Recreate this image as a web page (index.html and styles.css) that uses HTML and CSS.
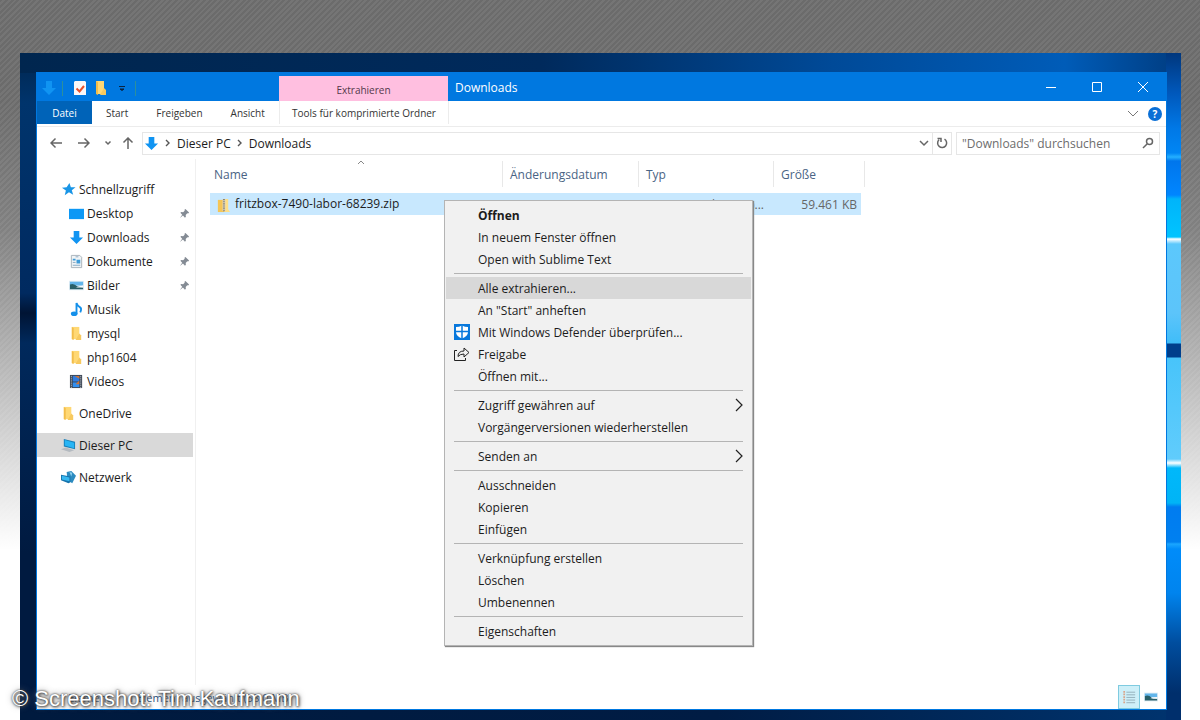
FILE: index.html
```html
<!DOCTYPE html>
<html lang="de">
<head>
  <meta charset="UTF-8" />
  <meta name="viewport" content="width=device-width, initial-scale=1.0"/>
  <title>Downloads</title>
  <link rel="stylesheet" href="styles.css">
</head>
<body>

  <!-- Shared icons -->
  <svg class="sprite" aria-hidden="true">
    <symbol id="i-down" viewBox="0 0 16 16"><path d="M5 1h6v7h4l-7 7-7-7h4z" fill="#1094f2"/></symbol>
    <symbol id="i-folder" viewBox="0 0 16 16"><path d="M3 1h8v13H3z" fill="#ffd874"/><path d="M3 1l2 1v13l-2-1z" fill="#f2bd4b"/><path d="M11 8l2 2v5H7z" fill="#f7c95f"/></symbol>
    <symbol id="i-picture" viewBox="0 0 16 16"><path d="M0 3h16v10H0z" fill="#dcebf5"/><path d="M1 4h14v4H1z" fill="#62b5ea"/><path d="M1 7q4-2 8 2l6 1v2H1z" fill="#285f68"/><path d="M7 10l8-2v2z" fill="#f5fafc"/></symbol>
    <symbol id="i-pin" viewBox="0 0 12 12"><path d="M7 1l4 4-1 1-1-.2L7.300 7.500 7.500 9.500l-1 1L4.300 8.300 1 11l2.500-3.700L1.500 5.300l1-1 2 .2L6.200 3 6 2z" fill="#848b94"/></symbol>
    <symbol id="i-more" viewBox="0 0 10 16"><path d="M2 2l6 6-6 6" fill="none" stroke="#222" stroke-width="1.200"/></symbol>
    <symbol id="i-chev" viewBox="0 0 8 8"><path d="M2 1l3 3-3 3" fill="none" stroke="#555" stroke-width="1.400"/></symbol>
  </svg>

  <div class="desktop">
    <div class="window">

      <header class="titlebar">
        <div class="quick">
          <svg class="icon"><use href="#i-down"/></svg>
          <i class="bar"></i>
          <button class="quick-btn" aria-label="Eigenschaften"><svg viewBox="0 0 16 16"><path d="M3 1h10l1 1v13H2V2z" fill="#fbf7f7"/><path d="M4.500 8.500l3 3L12 6" fill="none" stroke="#e8502c" stroke-width="2"/></svg></button>
          <button class="quick-btn" aria-label="Neuer Ordner"><svg><use href="#i-folder"/></svg></button>
          <button class="quick-btn" aria-label="Anpassen"><svg viewBox="0 0 16 16"><path d="M5 6.500h6M6 9h4l-2 1.500z" stroke="#0b2340" fill="#0b2340"/></svg></button>
          <i class="bar"></i>
        </div>
        <div class="context-title">Extrahieren</div>
        <h1>Downloads</h1>
        <div class="controls">
          <button aria-label="Minimieren"><svg viewBox="0 0 12 12"><path d="M1 6.500h10"/></svg></button>
          <button aria-label="Maximieren"><svg viewBox="0 0 12 12"><path d="M1.500 1.500h9v9h-9z"/></svg></button>
          <button aria-label="Schließen"><svg viewBox="0 0 12 12"><path d="M1 1l10 10M11 1L1 11"/></svg></button>
        </div>
      </header>

      <nav class="ribbon">
        <div class="tabs">
          <button class="tab file">Datei</button>
          <button class="tab">Start</button>
          <button class="tab">Freigeben</button>
          <button class="tab">Ansicht</button>
        </div>
        <button class="tab context-tab">Tools für komprimierte Ordner</button>
        <div class="ribbon-end">
          <button class="plain" aria-label="Menüband erweitern"><svg viewBox="0 0 12 12"><path d="M1 3l5 5 5-5" fill="none" stroke="#777"/></svg></button>
          <button class="help" aria-label="Hilfe">?</button>
        </div>
      </nav>

      <div class="address-row">
        <div class="history">
          <button class="plain" aria-label="Zurück"><svg viewBox="0 0 12 12"><path d="M12 6H1M5.500 1.500L1 6l4.500 4.500"/></svg></button>
          <button class="plain" aria-label="Vorwärts"><svg viewBox="0 0 12 12"><path d="M0 6h11M6.500 1.500L11 6l-4.500 4.500"/></svg></button>
          <button class="plain small" aria-label="Verlauf"><svg viewBox="0 0 12 12"><path d="M3.500 4.500L6 7l2.500-2.500"/></svg></button>
          <button class="plain" aria-label="Nach oben"><svg viewBox="0 0 12 12"><path d="M6 12V1M1.500 5.500L6 1l4.500 4.500"/></svg></button>
        </div>
        <div class="address">
          <svg class="icon"><use href="#i-down"/></svg>
          <svg class="chev"><use href="#i-chev"/></svg>
          <a href="#">Dieser PC</a>
          <svg class="chev"><use href="#i-chev"/></svg>
          <a href="#">Downloads</a>
          <button class="plain drop" aria-label="Vorherige Orte"><svg viewBox="0 0 12 12"><path d="M2 4l4 4 4-4"/></svg></button>
          <button class="plain reload" aria-label="Aktualisieren"><svg viewBox="0 0 12 12"><path d="M8.500 2.200A4.500 4.500 0 1 1 3 2.800M1.500 1.500H5V5"/></svg></button>
        </div>
        <label class="search">
          <input type="text" placeholder="&quot;Downloads&quot; durchsuchen" aria-label="Downloads durchsuchen">
          <svg viewBox="0 0 12 12"><circle cx="7.500" cy="4.500" r="3"/><path d="M5.300 6.700L1 11"/></svg>
        </label>
      </div>

      <div class="main">
        <nav class="sidebar">
          <ul>
            <li class="top"><a href="#"><svg class="icon" viewBox="0 0 16 16"><path d="M9 1l1.500 4.500 5 .2-4 3 1.500 5-4.500-2.700L4 14l1.200-5L1 6l5-.5z" fill="#1995e6"/></svg>Schnellzugriff</a></li>
            <li><a href="#"><svg class="icon" viewBox="0 0 16 16"><path d="M0 3h16v11H0z" fill="#0c98f5"/></svg>Desktop<svg class="pin"><use href="#i-pin"/></svg></a></li>
            <li><a href="#"><svg class="icon"><use href="#i-down"/></svg>Downloads<svg class="pin"><use href="#i-pin"/></svg></a></li>
            <li><a href="#"><svg class="icon" viewBox="0 0 16 16"><path d="M2.500 1.500h9l2 2v11h-11z" fill="#f1f4f6" stroke="#a9b2ba"/><path d="M4 5h3v2H4zM8 6h4v4H8z" fill="#3e9bd8"/><path d="M7 3h3M4 9h3M4 12h8" stroke="#86a9c2"/></svg>Dokumente<svg class="pin"><use href="#i-pin"/></svg></a></li>
            <li><a href="#"><svg class="icon"><use href="#i-picture"/></svg>Bilder<svg class="pin"><use href="#i-pin"/></svg></a></li>
            <li><a href="#"><svg class="icon" viewBox="0 0 16 16"><ellipse cx="5.500" cy="12.500" rx="3.500" ry="2.500" fill="#1490ea"/><path d="M8 13V1q1 3 3.500 4.500T12 11" fill="none" stroke="#1490ea" stroke-width="2"/></svg>Musik</a></li>
            <li><a href="#"><svg class="icon"><use href="#i-folder"/></svg>mysql</a></li>
            <li><a href="#"><svg class="icon"><use href="#i-folder"/></svg>php1604</a></li>
            <li><a href="#"><svg class="icon" viewBox="0 0 16 16"><path d="M1 1h13v14H1z" fill="#3c4654"/><path d="M4 2h7v6H4z" fill="#2e7ce0"/><path d="M4 9h7v5H4z" fill="#2f8ef0"/><path d="M6 2h5v3zM7 11l4-4v4z" fill="#cf7334"/><path d="M2.500 2v13M12.500 2v13" stroke="#c5ccd4" stroke-dasharray="1 1"/></svg>Videos</a></li>
            <li class="top gap"><a href="#"><svg class="icon"><use href="#i-folder"/></svg>OneDrive</a></li>
            <li class="top gap active"><a href="#"><svg class="icon" viewBox="0 0 16 16"><path d="M0 12l5-2 9 3-5 2z" fill="#b4bac0"/><path d="M3 1l12 3v8L3 9z" fill="#177fb8"/><path d="M4 2l10 3v6L4 8z" fill="#27b5f5"/></svg>Dieser PC</a></li>
            <li class="top gap"><a href="#"><svg class="icon" viewBox="0 0 16 16"><path d="M6 2l5-1 5 5-4 8-5-3z" fill="#2c8bc0"/><path d="M9 2l3 1-1 4z" fill="#8fd0ee"/><path d="M0 5l10 2v6L8 14 0 11z" fill="#1674ad"/><path d="M1 6l8 2v4l-8-2z" fill="#37b8f0"/></svg>Netzwerk</a></li>
          </ul>
        </nav>

        <section class="files">
          <table>
            <colgroup><col class="c-name"><col class="c-date"><col class="c-type"><col class="c-size"></colgroup>
            <thead>
              <tr>
                <th>Name<svg class="sort" viewBox="0 0 8 5"><path d="M1 4l3-3 3 3" fill="none" stroke="#888"/></svg></th>
                <th>Änderungsdatum</th>
                <th>Typ</th>
                <th>Größe</th>
              </tr>
            </thead>
            <tbody>
              <tr>
                <td class="name"><svg class="icon" viewBox="0 0 16 16"><path d="M2 2h7v13H2z" fill="#f5c555"/><path d="M9 1h4v11l2 3H9z" fill="#ffdf86"/><path d="M7 1h3v13H7z" fill="#d8d4c4"/><path d="M8.500 1v13" stroke="#6f6a58" stroke-width="1.500" stroke-dasharray="1 1"/></svg>fritzbox-7490-labor-68239.zip</td>
                <td></td>
                <td class="type">ZIP-Archiv (zip)...</td>
                <td class="size">59.461 KB</td>
              </tr>
            </tbody>
          </table>
        </section>
      </div>

      <footer class="status">
        <span>1 Element</span>
        <span>1 Element ausgewählt (58,0 MB)</span>
        <div class="views">
          <button class="on" aria-label="Details"><svg viewBox="0 0 16 16"><path d="M5 2.500h10M5 5.500h10M5 8.500h10M5 11.500h10M5 14.500h10" stroke="#8fa9b5"/><path d="M2.500 1v15" stroke="#d9a58a" stroke-width="2" stroke-dasharray="2 1"/></svg></button>
          <button aria-label="Große Symbole"><svg><use href="#i-picture"/></svg></button>
        </div>
      </footer>

      <!-- Context menu of the selected file -->
      <div class="menu" role="menu">
        <button role="menuitem" class="default">Öffnen</button>
        <button role="menuitem">In neuem Fenster öffnen</button>
        <button role="menuitem">Open with Sublime Text</button>
        <hr>
        <button role="menuitem" class="hover">Alle extrahieren...</button>
        <button role="menuitem">An "Start" anheften</button>
        <button role="menuitem"><svg class="mark" viewBox="0 0 16 16"><path d="M0 0h16v16H0z" fill="#0878dc"/><path d="M8 1.500q3 1.500 6 1.500v5q0 4-6 6.500Q2 12 2 8V3q3 0 6-1.500z" fill="#fff"/><path d="M8 1v14M1 7.500h14" stroke="#0878dc" stroke-width="1.500"/></svg>Mit Windows Defender überprüfen...</button>
        <button role="menuitem"><svg class="mark" viewBox="0 0 16 16"><path d="M3 4.500H.5v10h11V12M4 10.500q0-5.500 6-5.500V2l5 4.500-5 4.500V8q-4 0-6 2.500z" fill="none" stroke="#222"/></svg>Freigabe</button>
        <button role="menuitem">Öffnen mit...</button>
        <hr>
        <button role="menuitem">Zugriff gewähren auf<svg class="more"><use href="#i-more"/></svg></button>
        <button role="menuitem">Vorgängerversionen wiederherstellen</button>
        <hr>
        <button role="menuitem">Senden an<svg class="more"><use href="#i-more"/></svg></button>
        <hr>
        <button role="menuitem">Ausschneiden</button>
        <button role="menuitem">Kopieren</button>
        <button role="menuitem">Einfügen</button>
        <hr>
        <button role="menuitem">Verknüpfung erstellen</button>
        <button role="menuitem">Löschen</button>
        <button role="menuitem">Umbenennen</button>
        <hr>
        <button role="menuitem">Eigenschaften</button>
      </div>
    </div>
  </div>

  <p class="credit">© Screenshot: Tim Kaufmann</p>

</body>
</html>
```
FILE: styles.css
```css
* {
  box-sizing: border-box;
}
body {
  margin: 0;
  height: 100vh;
  min-height: 700px;
  display: flex;
  flex-direction: column;
  padding: 53px 19px 0 20px;
  position: relative;
  font-family: "Open Sans", "Noto Sans", sans-serif;
  font-size: 12px;
  color: #1c1c1c;
  background:
    linear-gradient(transparent 100px, rgba(255, 255, 255, 0.15) 230px, #fff 550px),
    repeating-linear-gradient(135deg, #6b6b6b 0 2px, #757575 2px 4px);
}
button, input {
  font: inherit;
  color: inherit;
}
button {
  padding: 0;
  border: none;
  background: none;
}
a {
  color: inherit;
  text-decoration: none;
}
svg {
  display: block;
  flex: none;
}
.sprite {
  position: absolute;
  width: 0;
  height: 0;
}
.icon {
  width: 15px;
  height: 15px;
}

/* Desktop wallpaper */
.desktop {
  flex: 1;
  display: flex;
  padding: 19px 14px 10px 16px;
  background:
    linear-gradient(#00377d 0, #0058bb 40px, #0078e6 75px, #0086f4 100px, #24b0ff 104px, #0076ec 108px, #0086ff 142px, #00b4fa 146px, #00c4ff 184px, #fff 186px, #5cc8fc 191px, #5cc4fa 260px, #40bdf8 290px, #003f8c 291px 304px, #48c4fa 305px, #60ccfc 406px, #fff 410px, #00b8fa 415px, #00b4f6 450px, #007cf0 454px, #0080f0 489px, #1aa6ff 491px, #008cfa 496px, #0084ee 540px, #004d9e 590px, #002f6c 640px) right / 15px 100% no-repeat,
    linear-gradient(90deg, #00264f 0, #002a5c 45%, #004a98 70%, #005cb8 90%, #003c80) top / 100% 20px no-repeat,
    linear-gradient(90deg, #001a3e 0, #001c44 60%, #00346f) bottom / 100% 11px no-repeat,
    linear-gradient(#00264f 0, #00346c 50px, #002a60 240px, #001434 260px, #00295c 290px, #001a40 500px);
}
.window {
  flex: 1;
  min-width: 0;
  position: relative;
  display: flex;
  flex-direction: column;
  background: #fff;
  border: 1px solid #0078e0;
}

/* Title bar */
.titlebar {
  display: flex;
  height: 28px;
  background: #0078e0;
  color: #fff;
}
.quick {
  width: 242px;
  display: flex;
  align-items: center;
  gap: 5px;
  padding: 2px 0 0 4px;
}
.quick svg {
  width: 16px;
  height: 16px;
}
.bar {
  width: 1px;
  height: 15px;
  margin-right: 4px;
  background: #2c8f9c;
}
.context-title {
  width: 169px;
  margin-top: 3px;
  line-height: 28px;
  text-align: center;
  font-size: 10px;
  background: #ffbfe0;
  color: #54394a;
}
.titlebar h1 {
  flex: 1;
  margin: 0;
  padding-left: 7px;
  font-size: 12px;
  font-weight: normal;
  line-height: 29px;
}
.controls {
  display: flex;
}
.controls button {
  width: 46px;
  display: flex;
  align-items: center;
  justify-content: center;
}
.controls svg {
  width: 12px;
  height: 12px;
  fill: none;
  stroke: #fff;
}

/* Ribbon */
.ribbon {
  display: flex;
  height: 26px;
  border-bottom: 1px solid #ececec;
  font-size: 10px;
  color: #333;
}
.tabs {
  width: 242px;
  display: flex;
}
.tab {
  height: 23px;
  line-height: 24px;
  padding: 0 14px;
}
.file {
  width: 55px;
  background: #0063b8;
  color: #fff;
}
.context-tab {
  width: 170px;
  padding: 0;
  border: solid #ececec;
  border-width: 0 1px;
}
.ribbon-end {
  margin-left: auto;
  display: flex;
  align-items: center;
  gap: 9px;
  padding-right: 4px;
}
.ribbon-end svg {
  width: 12px;
  height: 12px;
}
.help {
  width: 14px;
  height: 14px;
  border-radius: 50%;
  background: #0a6fd6;
  color: #fff;
  font-weight: bold;
  line-height: 14px;
}

/* Address row */
.address-row {
  display: flex;
  align-items: center;
  height: 32px;
  padding-right: 6px;
}
.address-row svg {
  fill: none;
  stroke: #666;
  stroke-width: 1.500;
}
.history {
  width: 105px;
  display: flex;
  align-items: center;
  gap: 16px;
  padding-left: 13px;
}
.history svg {
  width: 12px;
  height: 12px;
}
.history .small {
  margin: 0 -8px 0 -4px;
}
.address, .search {
  height: 23px;
  display: flex;
  align-items: center;
  border: 1px solid #e6e6e6;
}
.address {
  flex: 1;
  gap: 5px;
  padding-left: 1px;
}
.address .icon, .chev {
  stroke: none;
}
.chev {
  width: 8px;
  height: 8px;
}
.drop {
  margin-left: auto;
  margin-right: -3px;
}
.address button svg, .search svg {
  width: 12px;
  height: 12px;
}
.reload {
  height: 100%;
  padding: 0 3px;
  border-left: 1px solid #e6e6e6;
}
.search {
  width: 204px;
  margin-left: 4px;
  padding: 0 5px;
}
.search input {
  flex: 1;
  min-width: 0;
  padding: 0;
  border: none;
  outline: none;
}
.search input::placeholder {
  color: #6d6d6d;
}

/* Navigation pane */
.main {
  flex: 1;
  display: flex;
}
.sidebar {
  width: 159px;
  padding: 18px 2px 0 0;
  border-right: 1px solid #f0f0f0;
}
.sidebar ul {
  margin: 0;
  padding: 0;
  list-style: none;
}
.sidebar a {
  display: flex;
  align-items: center;
  gap: 3px;
  height: 24px;
  padding: 0 3px 0 32px;
}
.sidebar .top a {
  padding-left: 24px;
}
.gap {
  margin-top: 8px;
}
.active {
  background: #d9d9d9;
}
.pin {
  width: 11px;
  height: 11px;
  margin-left: auto;
}

/* File list */
.files {
  flex: 1;
  padding-left: 14px;
}
table {
  width: 651px;
  table-layout: fixed;
  border-collapse: collapse;
}
.c-name {
  width: 293px;
}
.c-date {
  width: 136px;
}
.c-type {
  width: 135px;
}
th {
  position: relative;
  height: 30px;
  padding: 0 0 0 4px;
  text-align: left;
  font-weight: normal;
  color: #4a6484;
}
th + th {
  padding-left: 7px;
}
th::after {
  content: "";
  position: absolute;
  right: 0;
  top: 2px;
  bottom: 2px;
  border-right: 1px solid #e8e8e8;
}
th:last-child::after {
  right: -4px;
}
.sort {
  position: absolute;
  left: 50%;
  top: 1px;
  width: 8px;
  height: 5px;
}
thead::after {
  content: "";
  display: block;
  height: 4px;
}
td {
  height: 22px;
  padding: 0;
  background: #c8e8fe;
  white-space: nowrap;
}
.name .icon {
  display: inline-block;
  margin: 0 4px 0 6px;
  vertical-align: middle;
}
.type {
  padding-right: 10px;
  text-align: right;
  color: #666;
}
.size {
  padding-right: 4px;
  text-align: right;
  color: #666;
}

/* Status bar */
.status {
  display: flex;
  align-items: center;
  gap: 18px;
  height: 24px;
  padding-left: 22px;
  font-size: 11px;
  color: #1f4e79;
}
.views {
  display: flex;
  margin-left: auto;
  padding-right: 4px;
}
.views button {
  width: 22px;
  height: 24px;
  display: flex;
  align-items: center;
  justify-content: center;
}
.views .on {
  border: 1px solid #7fcbe0;
  background: #cdeff8;
}
.views svg {
  width: 14px;
  height: 14px;
}

/* Context menu */
.menu {
  position: absolute;
  left: 407px;
  top: 127px;
  width: 309px;
  padding: 3px 1px;
  background: #f1f1f1;
  border: 1px solid #b4b4b4;
  box-shadow: 1px 1px 1px #888;
}
.menu button {
  position: relative;
  display: flex;
  align-items: center;
  width: 100%;
  height: 22px;
  padding-left: 32px;
}
.menu hr {
  height: 1px;
  margin: 3px 8px;
  border: none;
  background: #b4b4b4;
}
.menu .default {
  font-weight: bold;
}
.menu .hover {
  background: #d8d8d8;
}
.mark {
  position: absolute;
  left: 8px;
  width: 16px;
  height: 16px;
}
.more {
  width: 10px;
  height: 16px;
  margin: 0 7px 0 auto;
}

/* Photo credit */
.credit {
  position: absolute;
  left: 12px;
  bottom: 7px;
  margin: 0;
  font: 22px/28px "Liberation Sans", Arial, sans-serif;
  color: #fff;
  text-shadow: 0 0 2px #333, 1px 1px 3px #444, 0 0 6px #777;
}
```
